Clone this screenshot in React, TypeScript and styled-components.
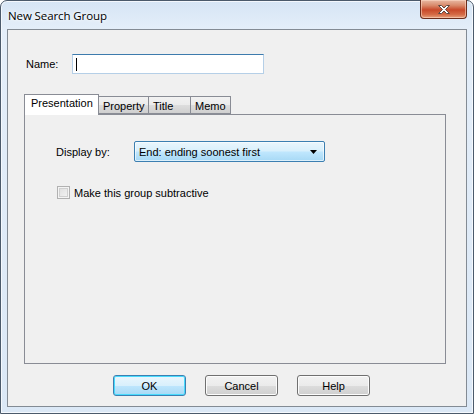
import React, { useState } from "react";
import styled, { createGlobalStyle } from "styled-components";

const GlobalStyle = createGlobalStyle`
  html, body {
    margin: 0;
    padding: 0;
    background: #ffffff;
  }

  body {
    font-family: "Liberation Sans", Arial, sans-serif;
    font-size: 11px;
    color: #000000;
  }
`;

const Window = styled.div`
  width: 474px;
  height: 414px;
  box-sizing: border-box;

  display: flex;
  flex-direction: column;

  border: 1px solid #4b5a6b;
  border-radius: 7px 7px 0 0;
  background: linear-gradient(to bottom, #d6e5f5 0px, #e4eef9 28px, #dbe8f6 100%);
  box-shadow: inset 0 0 0 1px #f4f8fd;
`;

const TitleBar = styled.div`
  height: 28px;
  flex-shrink: 0;

  display: flex;
  align-items: flex-start;
  justify-content: space-between;
`;

const Caption = styled.span`
  margin: 7px 0 0 7px;

  font-family: "Open Sans", "Noto Sans", sans-serif;
  font-size: 11.5px;
  letter-spacing: -0.1px;
  color: #000000;
  text-shadow: 0 0 6px #ffffff, 0 0 3px #ffffff;
`;

const CloseButton = styled.button`
  width: 47px;
  height: 19px;
  margin: -1px 6px 0 0;
  padding: 0;

  display: flex;
  align-items: center;
  justify-content: center;

  border: 1px solid #6b2d1c;
  border-top: none;
  border-radius: 0 0 4px 4px;
  background: linear-gradient(
    to bottom,
    #e8b9a4 0%,
    #d98a6b 30%,
    #c8492a 55%,
    #d46a45 80%,
    #e6a07c 100%
  );
  box-shadow: inset 0 0 0 1px rgba(255, 220, 200, 0.55);
`;

const Client = styled.div`
  flex: 1;
  margin: 0 6px 6px 6px;

  display: flex;
  flex-direction: column;

  border: 1px solid #838b94;
  background: #f0f0f0;
`;

const NameRow = styled.div`
  height: 20px;
  margin: 24px 0 0 18px;

  display: flex;
  align-items: center;
`;

const Label = styled.label`
  width: ${(p: { width?: number }) => (p.width ? `${p.width}px` : "auto")};
  flex-shrink: 0;
`;

const TextBox = styled.div`
  width: 192px;
  height: 20px;
  box-sizing: border-box;
  padding-left: 3px;

  display: flex;
  align-items: center;

  border: 1px solid #b5cfe7;
  border-top-color: #3d7bad;
  background: #ffffff;
`;

const Caret = styled.span`
  width: 1px;
  height: 13px;
  background: #000000;
`;

const Tabs = styled.div`
  margin: 20px 0 0 16px;
  width: 422px;

  display: flex;
  flex-direction: column;
`;

const TabStrip = styled.div`
  height: 20px;
  display: flex;
  align-items: flex-end;
`;

const Tab = styled.div<{ $active?: boolean; $w: number }>`
  width: ${(p) => p.$w}px;
  height: ${(p) => (p.$active ? 21 : 18)}px;
  box-sizing: border-box;
  padding: ${(p) => (p.$active ? "2px 0 0 6px" : "3px 0 0 4px")};

  position: relative;
  z-index: ${(p) => (p.$active ? 2 : 1)};
  margin-bottom: ${(p) => (p.$active ? -1 : 0)}px;
  margin-left: ${(p) => (p.$active ? 0 : -1)}px;

  border: 1px solid #898c95;
  border-bottom: ${(p) => (p.$active ? "none" : "1px solid #898c95")};
  background: ${(p) =>
    p.$active
      ? "#ffffff"
      : "linear-gradient(to bottom, #f2f2f2 0%, #ebebeb 50%, #dddddd 51%, #cfcfcf 100%)"};

  font-size: 11px;
  line-height: 13px;
  white-space: nowrap;
`;

const Panel = styled.div`
  height: 250px;
  box-sizing: border-box;
  padding: 26px 0 0 31px;

  display: flex;
  flex-direction: column;

  border: 1px solid #898c95;
  background: #f0f0f0;
`;

const FieldRow = styled.div`
  height: 21px;
  display: flex;
  align-items: center;
`;

const Combo = styled.div`
  width: 191px;
  height: 21px;
  box-sizing: border-box;
  padding: 0 7px 0 4px;

  display: flex;
  align-items: center;
  justify-content: space-between;

  border: 1px solid #3c7fb1;
  border-radius: 2px;
  background: linear-gradient(to bottom, #eaf6fd 0%, #d9f0fc 45%, #bee6fd 55%, #a7d9f5 100%);
  box-shadow: inset 0 0 0 1px rgba(255, 255, 255, 0.6);
`;

const CheckRow = styled.label`
  margin: 24px 0 0 1px;
  height: 13px;

  display: flex;
  align-items: center;
  gap: 4px;
`;

const CheckBox = styled.span`
  width: 13px;
  height: 13px;
  box-sizing: border-box;

  border: 1px solid #b1b1b1;
  background: linear-gradient(to bottom right, #dcdcdc, #f6f6f6);
  box-shadow: inset 0 0 0 1px #f4f4f4, inset 0 0 0 2px #d0d0d0;
`;

const ButtonRow = styled.div`
  margin: 11px 0 0 105px;
  display: flex;
  gap: 19px;
`;

const Button = styled.button<{ $default?: boolean }>`
  width: 73px;
  height: 21px;
  padding: 0;

  border: 1px solid ${(p) => (p.$default ? "#3c7fb1" : "#707070")};
  border-radius: 3px;
  background: ${(p) =>
    p.$default
      ? "linear-gradient(to bottom, #eaf6fd 0%, #d9f0fc 50%, #bee6fd 51%, #a7d9f5 100%)"
      : "linear-gradient(to bottom, #f2f2f2 0%, #ebebeb 50%, #dddddd 51%, #cfcfcf 100%)"};
  box-shadow: inset 0 0 0 1px ${(p) => (p.$default ? "#48dbfd" : "#fcfcfc")};

  font-family: "Liberation Sans", Arial, sans-serif;
  font-size: 11px;
  color: #000000;
`;

const tabs = [
  { name: "Presentation", w: 75 },
  { name: "Property", w: 51 },
  { name: "Title", w: 43 },
  { name: "Memo", w: 41 },
];

export default function App() {
  const [active] = useState("Presentation");

  return (
    <>
      <GlobalStyle />
      <Window>
        <TitleBar>
          <Caption>New Search Group</Caption>
          <CloseButton aria-label="Close">
            <svg width="14" height="11" viewBox="0 0 14 11">
              <path
                d="M1.5 1.5 L4.5 1.5 L7 4 L9.5 1.5 L12.5 1.5 L8.5 5.5 L12.5 9.5 L9.5 9.5 L7 7 L4.5 9.5 L1.5 9.5 L5.5 5.5 Z"
                fill="#ffffff"
                stroke="#5d4a44"
                strokeWidth="1"
                strokeLinejoin="round"
              />
            </svg>
          </CloseButton>
        </TitleBar>
        <Client>
          <NameRow>
            <Label width={46}>Name:</Label>
            <TextBox>
              <Caret />
            </TextBox>
          </NameRow>

          <Tabs>
            <TabStrip>
              {tabs.map((t) => (
                <Tab key={t.name} $w={t.w} $active={t.name === active}>
                  {t.name}
                </Tab>
              ))}
            </TabStrip>
            <Panel>
              <FieldRow>
                <Label width={78}>Display by:</Label>
                <Combo>
                  <span>End: ending soonest first</span>
                  <svg width="7" height="4" viewBox="0 0 7 4">
                    <path d="M0 0 H7 L3.5 4 Z" fill="#000000" />
                  </svg>
                </Combo>
              </FieldRow>
              <CheckRow>
                <CheckBox />
                <span>Make this group subtractive</span>
              </CheckRow>
            </Panel>
          </Tabs>

          <ButtonRow>
            <Button $default>OK</Button>
            <Button>Cancel</Button>
            <Button>Help</Button>
          </ButtonRow>
        </Client>
      </Window>
    </>
  );
}
